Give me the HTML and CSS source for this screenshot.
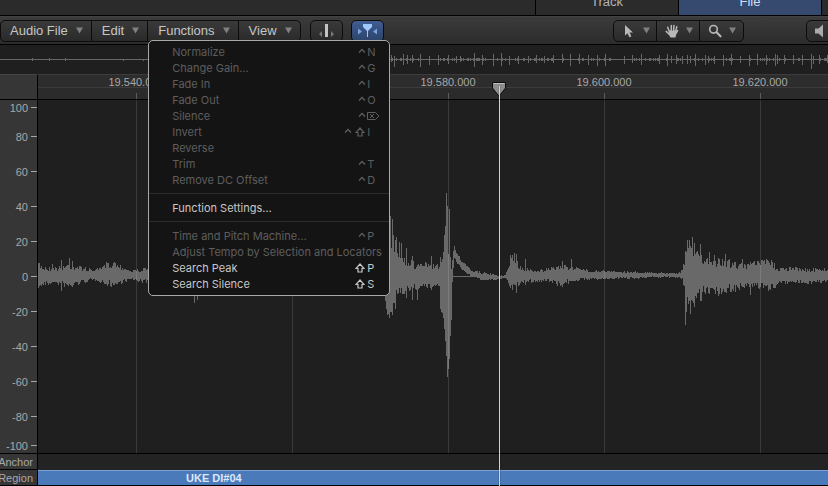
FILE: index.html
```html
<!DOCTYPE html>
<html lang="en">
<head>
  <meta charset="UTF-8">
  <meta name="viewport" content="width=device-width, initial-scale=1.0">
  <title>Audio File Editor</title>
  <link rel="stylesheet" href="styles.css">
</head>
<body>

  <!-- Shared icons -->
  <svg class="icon-defs" width="0" height="0">
    <symbol id="icon-caret" viewBox="0 0 7 7"><path d="M0 0.5h7L3.5 6.5z" fill="currentColor"/></symbol>
    <symbol id="icon-ctrl" viewBox="0 0 8 10"><path d="M1 5.500l3-3 3 3" fill="none" stroke="currentColor" stroke-width="1.300"/></symbol>
    <symbol id="icon-shift" viewBox="0 0 10 10"><path d="M5 1L9 5.500H7V9H3V5.500H1z" fill="none" stroke="currentColor" stroke-width="1.200"/></symbol>
    <symbol id="icon-delete" viewBox="0 0 13 10"><path d="M0.500 1.500h8L12 5 8.500 8.500h-8zM3 3l4 4M7 3l-4 4" fill="none" stroke="currentColor"/></symbol>
  </svg>

  <div class="tabs" role="tablist">
    <button class="tab" role="tab">Track</button>
    <button class="tab active" role="tab" aria-selected="true">File</button>
  </div>

  <div class="toolbar">
    <div class="group menus">
      <button class="menu-button">Audio File<svg class="caret"><use href="#icon-caret"/></svg></button>
      <button class="menu-button">Edit<svg class="caret"><use href="#icon-caret"/></svg></button>
      <div class="menu-holder">
        <button class="menu-button" aria-expanded="true">Functions<svg class="caret"><use href="#icon-caret"/></svg></button>
        <div class="menu" role="menu">
          <button class="item" role="menuitem" disabled>Normalize<span class="keys"><svg class="ctrl"><use href="#icon-ctrl"/></svg><kbd>N</kbd></span></button>
          <button class="item" role="menuitem" disabled>Change Gain…<span class="keys"><svg class="ctrl"><use href="#icon-ctrl"/></svg><kbd>G</kbd></span></button>
          <button class="item" role="menuitem" disabled>Fade In<span class="keys"><svg class="ctrl"><use href="#icon-ctrl"/></svg><kbd>I</kbd></span></button>
          <button class="item" role="menuitem" disabled>Fade Out<span class="keys"><svg class="ctrl"><use href="#icon-ctrl"/></svg><kbd>O</kbd></span></button>
          <button class="item" role="menuitem" disabled>Silence<span class="keys"><svg class="ctrl"><use href="#icon-ctrl"/></svg><kbd><svg class="delete"><use href="#icon-delete"/></svg></kbd></span></button>
          <button class="item" role="menuitem" disabled>Invert<span class="keys"><svg class="ctrl"><use href="#icon-ctrl"/></svg><svg class="shift"><use href="#icon-shift"/></svg><kbd>I</kbd></span></button>
          <button class="item" role="menuitem" disabled>Reverse</button>
          <button class="item" role="menuitem" disabled>Trim<span class="keys"><svg class="ctrl"><use href="#icon-ctrl"/></svg><kbd>T</kbd></span></button>
          <button class="item" role="menuitem" disabled>Remove DC Offset<span class="keys"><svg class="ctrl"><use href="#icon-ctrl"/></svg><kbd>D</kbd></span></button>
          <hr>
          <button class="item" role="menuitem">Function Settings…</button>
          <hr>
          <button class="item" role="menuitem" disabled>Time and Pitch Machine…<span class="keys"><svg class="ctrl"><use href="#icon-ctrl"/></svg><kbd>P</kbd></span></button>
          <button class="item" role="menuitem" disabled>Adjust Tempo by Selection and Locators</button>
          <button class="item" role="menuitem">Search Peak<span class="keys"><svg class="shift"><use href="#icon-shift"/></svg><kbd>P</kbd></span></button>
          <button class="item" role="menuitem">Search Silence<span class="keys"><svg class="shift"><use href="#icon-shift"/></svg><kbd>S</kbd></span></button>
        </div>
      </div>
      <button class="menu-button">View<svg class="caret"><use href="#icon-caret"/></svg></button>
    </div>

    <button class="group toggle" aria-label="Flex">
      <svg width="15" height="14" viewBox="0 0 15 14">
        <rect x="6" y="0" width="3" height="13" fill="#c4c4c4"/>
        <path d="M3 7v6L0 10zM12 7v6l3-3z" fill="#777"/>
      </svg>
    </button>
    <button class="group toggle on" aria-label="Catch playhead" aria-pressed="true">
      <svg width="19" height="14" viewBox="0 0 19 14">
        <path d="M5 0h9v3l-4 4v6H9V7L5 3z" fill="#9cc8fb"/>
        <path d="M0 4.500v6L4 7.500zM19 4.500v6L15 7.500z" fill="#7ba3e0"/>
      </svg>
    </button>

    <div class="group tools">
      <button class="tool" aria-label="Pointer tool">
        <svg width="14" height="14" viewBox="0 0 14 14"><path d="M3 1v10.500l2.500-2.300L7.400 13.300l2-0.900-1.800-4H11z" fill="#b8b8b8"/></svg>
        <svg class="caret"><use href="#icon-caret"/></svg>
      </button>
      <button class="tool" aria-label="Hand tool">
        <svg width="14" height="14" viewBox="0 0 14 14">
          <path d="M4.500 8L2.700 3.300M6.300 7V1.600M8.600 7L9 1.400M10.600 7.500l1.200-4.700M4.500 10.500L1.200 7.400" fill="none" stroke="#b8b8b8" stroke-width="1.500" stroke-linecap="round"/>
          <path d="M4 6.500h7.600l1-0.800c1 0 0.900 0.800 0.500 1.500L11 11l-0.500 2.500H5.500L3.500 10z" fill="#b8b8b8"/>
        </svg>
        <svg class="caret"><use href="#icon-caret"/></svg>
      </button>
      <button class="tool" aria-label="Zoom tool">
        <svg width="14" height="14" viewBox="0 0 14 14">
          <circle cx="5.500" cy="5.300" r="3.800" fill="none" stroke="#b8b8b8" stroke-width="1.600"/>
          <path d="M8.500 8.300l4 4" stroke="#b8b8b8" stroke-width="2.200" stroke-linecap="round"/>
        </svg>
        <svg class="caret"><use href="#icon-caret"/></svg>
      </button>
    </div>

    <button class="group speaker" aria-label="Prelisten">
      <svg width="14" height="14" viewBox="0 0 14 14"><path d="M0 4.500h3.500L8 0.500v13L3.500 9.500H0z" fill="#aaa"/></svg>
    </button>
  </div>

  <svg class="overview" id="overview"><path/></svg>

  <div class="editor">
    <div class="corner"></div>
    <div class="ruler">
      <span class="mark">19.540.000</span>
      <span class="mark">19.560.000</span>
      <span class="mark">19.580.000</span>
      <span class="mark">19.600.000</span>
      <span class="mark">19.620.000</span>
    </div>

    <div class="scale">
      <span>100</span>
      <span>80</span>
      <span>60</span>
      <span>40</span>
      <span>20</span>
      <span>0</span>
      <span>-20</span>
      <span>-40</span>
      <span>-60</span>
      <span>-80</span>
      <span>-100</span>
    </div>
    <svg class="wave" id="wave"><path class="bars"/><path class="zero"/><path class="lines"/></svg>

    <div class="row-label">Anchor</div>
    <div class="anchor"></div>

    <div class="row-label">Region</div>
    <div class="region">UKE DI#04</div>

    <div class="playhead">
      <svg width="16" height="16" viewBox="0 0 16 16">
        <path d="M1.500 1.500h13v5.500L8.500 14.500h-1L1.500 7z" fill="#8d8d8d" stroke="#0d0d0d"/>
        <path d="M2.500 2.500h11" stroke="#bdbdbd"/>
      </svg>
    </div>
  </div>

  <script src="script.js"></script>
</body>
</html>
```
FILE: styles.css
```css
* {
  box-sizing: border-box;
}
body {
  margin: 0;
  min-height: 100vh;
  display: flex;
  flex-direction: column;
  overflow: hidden;
  background-color: #1f1f1f;
  color: #a8a8a8;
  font-family: "Liberation Sans", Arial, sans-serif;
  font-size: 11px;
}
button {
  margin: 0;
  padding: 0;
  border: 0;
  background: none;
  color: inherit;
  font: inherit;
}
svg {
  display: block;
  flex: none;
}
.icon-defs {
  position: absolute;
}

/* Tabs */
.tabs {
  display: flex;
  justify-content: flex-end;
  align-items: flex-end;
  height: 16px;
  padding-right: 6px;
  overflow: hidden;
  background-color: #2b2b2b;
  border-bottom: 1px solid #000;
}
.tab {
  width: 143px;
  padding: 8px 0 6px;
  border-left: 1px solid #000;
  color: #b4b4b4;
  font-size: 13px;
  line-height: 15px;
}
.tab.active {
  width: 144px;
  border-right: 1px solid #000;
  background-color: #354a6e;
  color: #d0defa;
}

/* Toolbar */
.toolbar {
  display: flex;
  align-items: center;
  height: 29px;
  background: linear-gradient(#3b3b3b, #2c2c2c);
  border-top: 1px solid #424242;
  border-bottom: 1px solid #000;
}
.group {
  display: flex;
  height: 22px;
  flex: none;
  border: 1px solid #0c0c0c;
  border-radius: 5px;
  background: linear-gradient(#3a3a3a, #2a2a2a);
}
.menu-button {
  display: flex;
  align-items: center;
  gap: 8px;
  height: 20px;
  padding: 0 8px 0 10px;
  border-right: 1px solid #0c0c0c;
  color: #c6c6c6;
  font-size: 13px;
}
.menus > .menu-button:first-child {
  padding-left: 9px;
}
.menus > .menu-button:last-child {
  border-right: 0;
}
.caret {
  width: 7px;
  height: 7px;
  color: #808080;
}
.toggle {
  width: 33px;
  margin-left: 8px;
  align-items: center;
  justify-content: center;
}
.menus + .toggle {
  margin-left: 9px;
}
.toggle.on {
  background: linear-gradient(#3f5d92, #2d4369);
}
.tools {
  margin-left: auto;
}
.tool {
  display: flex;
  align-items: center;
  gap: 7px;
  width: 43px;
  padding-left: 8px;
  border-right: 1px solid #0c0c0c;
}
.tool:last-child {
  border-right: 0;
}
.speaker {
  width: 32px;
  margin: 0 -10px 0 62px;
  align-items: center;
  padding-left: 8px;
}

/* Functions menu */
.menu-holder {
  position: relative;
}
.menu {
  position: absolute;
  z-index: 10;
  top: 19px;
  left: 0;
  width: 242px;
  padding: 3px 0;
  background-color: #141414;
  border: 1px solid #a8a8a8;
  border-radius: 5px;
  font-family: Inter, "Liberation Sans", Arial, sans-serif;
}
.item {
  display: flex;
  align-items: center;
  width: 100%;
  height: 16px;
  padding-left: 23px;
  color: #c8c8c8;
  white-space: nowrap;
}
.item:disabled {
  color: #5e5e5e;
}
.keys {
  display: flex;
  align-items: center;
  margin-left: auto;
}
.keys kbd {
  width: 22px;
  font: inherit;
  text-align: left;
}
.ctrl {
  width: 8px;
  height: 10px;
  margin-right: 1px;
}
.shift {
  width: 10px;
  height: 10px;
  margin: 0 2px;
}
.delete {
  width: 13px;
  height: 10px;
}
.menu hr {
  height: 1px;
  margin: 5px 0 6px;
  border: 0;
  background-color: #2e2e2e;
}

/* Overview waveform */
.overview {
  width: 100%;
  height: 29px;
  background-color: #1f1f1f;
}
.overview path {
  fill: #676767;
}

/* Editor */
.editor {
  position: relative;
  flex: 1;
  display: grid;
  grid-template-columns: 38px 1fr;
  grid-template-rows: 26px 1fr 16px 16px;
}
.corner,
.scale,
.row-label {
  background-color: #363636;
  border-right: 1px solid #000;
  border-bottom: 1px solid #000;
}
.corner {
  border-top: 1px solid #454545;
}
.ruler {
  display: flex;
  min-width: 0;
  overflow: hidden;
  padding-left: 20px;
  background: linear-gradient(#2d2d2d 12px, #3c3c3c 12px, #3c3c3c 13px, #2b2b2b 13px);
  border-top: 1px solid #3c3c3c;
  border-bottom: 1px solid #000;
}
.mark {
  position: relative;
  flex: none;
  width: 156px;
  line-height: 14px;
  text-align: center;
}
.mark::after {
  content: "";
  position: absolute;
  left: 50%;
  bottom: 0;
  width: 1px;
  height: 6px;
  background-color: #5c5c5c;
}
.scale {
  display: flex;
  flex-direction: column;
}
.scale span {
  display: flex;
  align-items: center;
  justify-content: flex-end;
  gap: 3px;
  height: 35px;
}
.scale span:first-child,
.scale span:last-child {
  height: 15px;
}
.scale span:first-child {
  margin-bottom: auto;
}
.scale span:last-child {
  margin-top: auto;
}
.scale span::after {
  content: "";
  width: 6px;
  height: 1px;
  background-color: #a4a4a4;
}
.wave {
  width: 100%;
  height: 100%;
  min-height: 354px;
  border-bottom: 1px solid #000;
  background-color: #1f1f1f;
}
.wave .bars,
.wave .zero {
  fill: #696969;
}
.wave .lines {
  fill: #fff;
  fill-opacity: 0.12;
}
.row-label {
  display: flex;
  align-items: center;
  justify-content: flex-end;
  overflow: hidden;
  padding-right: 4px;
}
.anchor {
  background-color: #232323;
}
.region {
  padding-left: 148px;
  background-color: #4b7aba;
  border-top: 1px solid #7ca2d8;
  border-bottom: 1px solid #000;
  color: #dce8fa;
  font-weight: bold;
  line-height: 14px;
}
.playhead {
  position: absolute;
  top: 7px;
  bottom: 0;
  left: 491px;
  width: 16px;
}
.playhead::after {
  content: "";
  position: absolute;
  top: 5px;
  bottom: 0;
  left: 8px;
  width: 1px;
  background-color: #d4d4d4;
  box-shadow: 0 0 1px #000;
}
```
FILE: script.js
```js
const wave = document.getElementById('wave');
const overview = document.getElementById('overview');

const ZERO = 176;

// Envelope points: x, top, bottom
const envelope = [
  [0, 166, 185], [10, 169, 183], [22, 168, 183], [30, 166, 186], [42, 168, 182],
  [52, 170, 180], [60, 170, 180], [68, 166, 183], [76, 164, 184], [82, 167, 182],
  [92, 171, 179], [104, 170, 181], [150, 169, 183], [250, 169, 183], [345, 168, 184],
  [348, 150, 206], [349, 150, 212], [354, 153, 212], [358, 155, 198], [362, 158, 190],
  [370, 163, 189], [380, 167, 187], [398, 166, 187], [401, 169, 184], [402, 163, 208],
  [404, 157, 212], [405, 148, 222], [407, 127, 243], [408, 100, 256], [409, 104, 272],
  [410, 150, 272], [411, 112, 258], [412, 160, 232], [413, 167, 218], [414, 156, 180],
  [416, 150, 158], [419, 153, 163], [423, 161, 168], [428, 166, 173], [433, 170, 176],
  [438, 172, 178], [446, 173, 180], [455, 175, 180], [461, 176, 179], [467, 175, 178],
  [470, 168, 181], [472, 160, 185], [478, 160, 187], [481, 168, 183], [490, 170, 181],
  [500, 171, 181], [510, 170, 180], [522, 167, 184], [535, 168, 180], [550, 171, 179],
  [565, 171, 179], [575, 172, 178], [590, 172, 178], [620, 173, 177], [642, 173, 177],
  [644, 170, 180], [646, 164, 190], [648, 154, 198], [652, 150, 202], [656, 152, 198],
  [660, 158, 192], [665, 162, 190], [680, 163, 190], [690, 163, 189], [705, 167, 186],
  [715, 165, 186], [725, 162, 185], [731, 162, 188], [740, 169, 183], [755, 169, 182],
  [770, 170, 182], [790, 170, 181], [850, 171, 180], [2000, 173, 178]
];

// Single-pixel peaks: x -> [top, bottom]
const peaks = {
  1: [163, 186], 14: [164, 182], 23: [160, 191], 31: [158, 184], 34: [161, 187],
  68: [162, 184], 76: [162, 185], 156: [160, 203], 159: [162, 200],
  348: [140, 209], 351: [130, 218], 352: [116, 212], 354: [119, 215], 355: [135, 203],
  357: [140, 209], 358: [137, 190], 361: [142, 188], 363: [143, 188], 368: [148, 198],
  374: [156, 200], 379: [165, 200], 387: [162, 184], 393: [156, 190],
  402: [157, 209], 408: [93, 256], 409: [106, 277], 411: [109, 259],
  416: [146, 158], 472: [155, 188], 474: [155, 190], 476: [153, 185], 478: [154, 193],
  487: [159, 185], 524: [161, 187], 533: [159, 181],
  647: [151, 225], 648: [152, 212], 649: [140, 197], 651: [140, 201], 652: [146, 214],
  654: [137, 201], 656: [143, 207], 659: [151, 193], 662: [144, 201], 663: [155, 201],
  671: [152, 194], 676: [155, 190], 680: [158, 196], 687: [154, 192], 697: [162, 192],
  704: [159, 187], 712: [162, 195], 728: [159, 186], 730: [161, 191]
};

// Overview peaks: x, up, down
const ticks = [
  [32, 1, 1], [49, 1, 1], [65, 1, 1], [123, 0, 1], [143, 0, 1],
  [391, 4, 2], [394, 3, 7], [403, 5, 5], [407, 4, 4], [412, 4, 3], [420, 5, 7], [429, 3, 5],
  [438, 4, 5], [448, 4, 4], [456, 3, 3], [460, 3, 2], [474, 6, 7], [482, 4, 5], [493, 5, 6],
  [501, 6, 6], [509, 3, 5], [518, 3, 4], [528, 3, 3], [536, 4, 3], [544, 3, 3], [553, 4, 3],
  [562, 5, 3], [570, 5, 6], [579, 5, 4], [588, 4, 5], [597, 4, 6], [605, 5, 6], [624, 3, 4],
  [632, 4, 3], [641, 5, 5], [659, 4, 4], [667, 5, 6], [671, 3, 3], [676, 4, 4], [682, 3, 4],
  [687, 4, 4], [690, 3, 3], [695, 5, 6], [705, 4, 5], [708, 3, 3], [714, 3, 4], [723, 4, 6],
  [731, 5, 5], [740, 3, 3], [749, 4, 6], [757, 5, 5], [766, 4, 5], [775, 5, 6], [777, 4, 4],
  [784, 4, 4], [793, 4, 4], [802, 4, 5], [811, 5, 9], [813, 3, 4], [819, 4, 4], [827, 4, 3]
];

let seed = 7;
function random() {
  seed = (seed * 16807) % 2147483647;
  return seed / 2147483647;
}

function bar(x, top, bottom) {
  return `M${x} ${top}h1V${bottom}h-1z`;
}

function drawWave() {
  const width = wave.clientWidth;
  let d = '';
  let i = 0;
  for (let x = 0; x < width; x++) {
    while (envelope[i + 1][0] <= x) i++;
    const [x0, t0, b0] = envelope[i];
    const [x1, t1, b1] = envelope[i + 1];
    const p = (x - x0) / (x1 - x0);
    let top = t0 + (t1 - t0) * p;
    let bottom = b0 + (b1 - b0) * p;
    const jitter = Math.min((bottom - top) * 0.35, 9);
    top += (random() - 0.5) * jitter;
    bottom += (random() - 0.5) * jitter;
    if (peaks[x]) [top, bottom] = peaks[x];
    d += bar(x, Math.round(top), Math.max(Math.round(bottom), Math.round(top) + 1));
  }
  wave.querySelector('.bars').setAttribute('d', d);
  wave.querySelector('.zero').setAttribute('d', `M414 ${ZERO}h20v1h-20z`);

  let lines = '';
  for (let x = 98; x < width; x += 156) {
    lines += bar(x, 0, wave.clientHeight);
  }
  wave.querySelector('.lines').setAttribute('d', lines);
}

function drawOverview() {
  const width = overview.clientWidth;
  let d = `M0 14h${width}v1H0z`;
  for (let x = 391; x < width; x++) {
    const r = random();
    if (r > 0.8) d += bar(x, 13, 15 + Math.round(r));
  }
  ticks.forEach(([x, up, down]) => {
    d += bar(x, 14 - up, 15 + down);
  });
  overview.querySelector('path').setAttribute('d', d);
}

function draw() {
  seed = 7;
  drawWave();
  drawOverview();
}

window.addEventListener('resize', draw);
draw();
```
